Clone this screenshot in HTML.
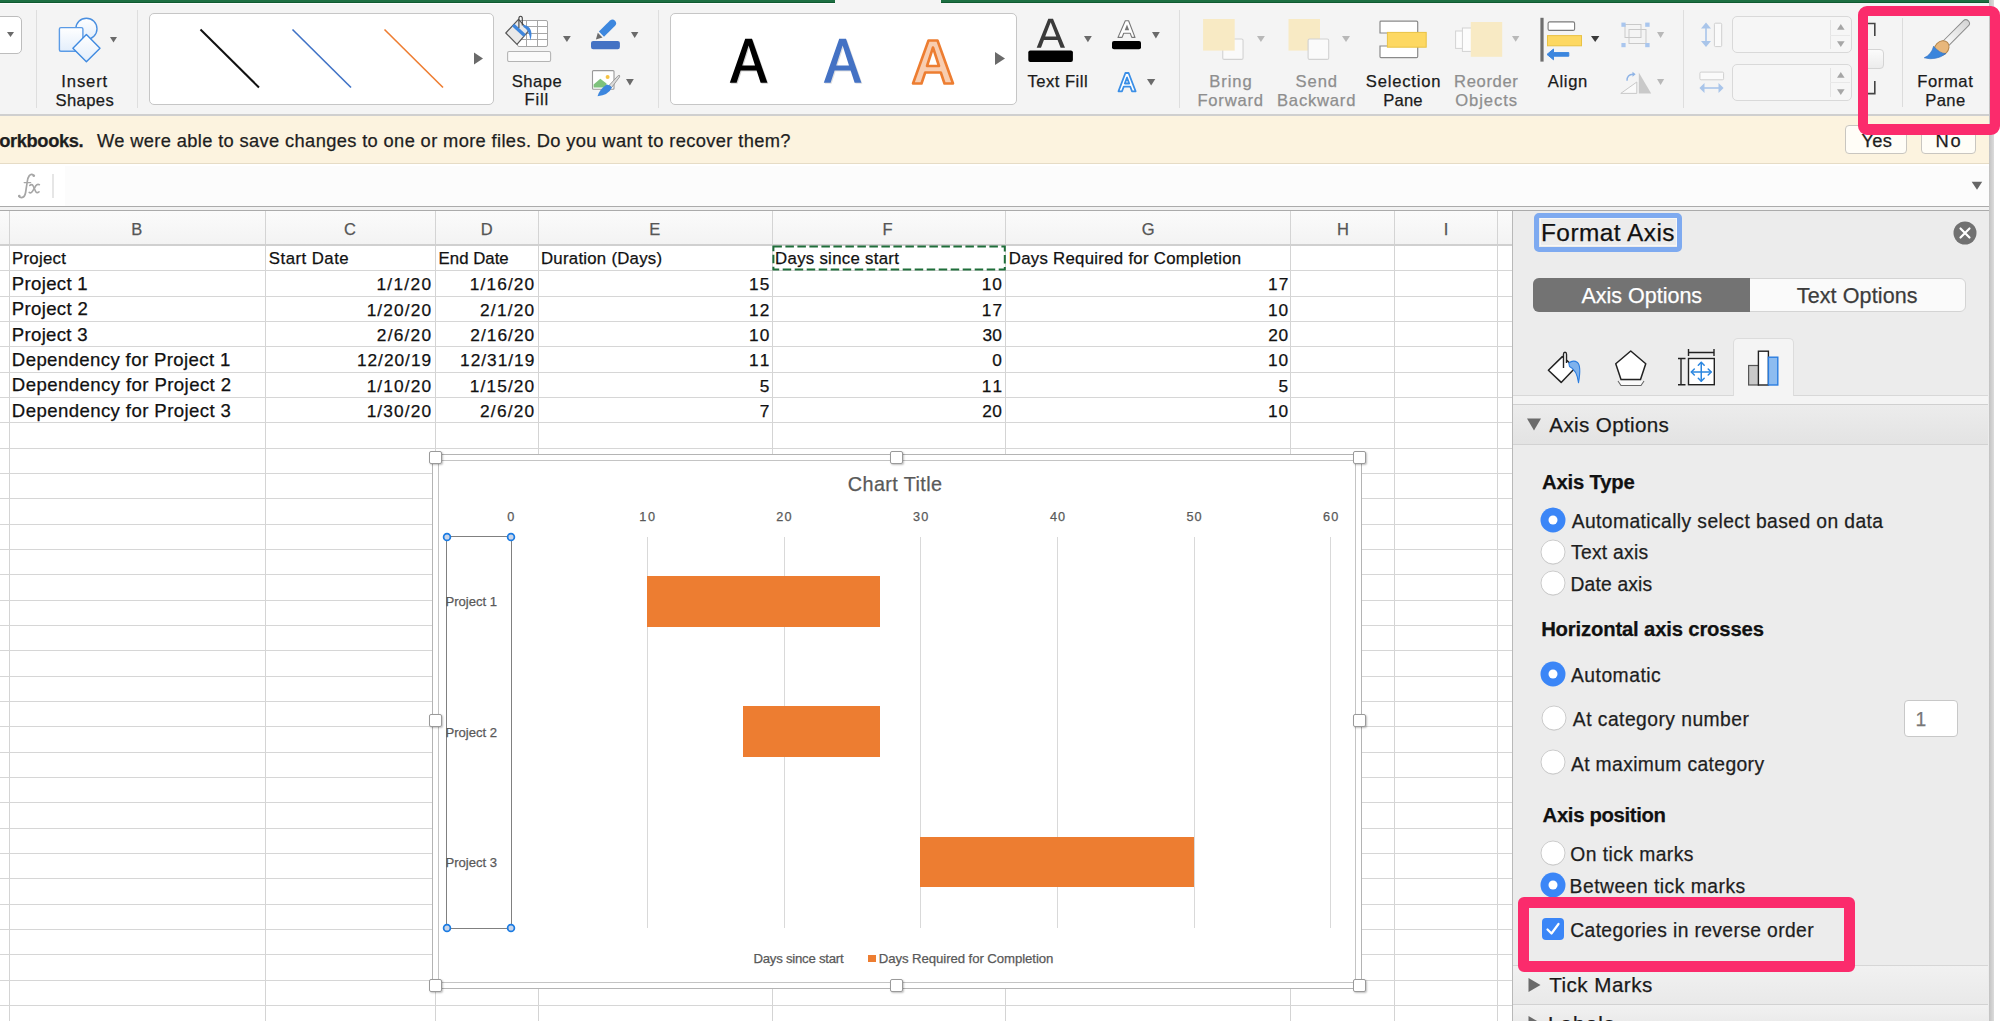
<!DOCTYPE html><html><head><meta charset="utf-8"><title>Excel</title><style>
*{margin:0;padding:0;box-sizing:border-box}
html,body{width:2000px;height:1021px;overflow:hidden;background:#fff;font-family:"Liberation Sans",sans-serif;color:#222}
.t{position:absolute;white-space:nowrap;line-height:1;-webkit-text-stroke:0.25px currentColor}
.a{position:absolute}
</style></head><body>
<div style="position:absolute;left:0px;top:0px;width:2000px;height:115px;background:#f4f4f4"></div>
<div style="position:absolute;left:0px;top:0px;width:835px;height:3px;background:#1d6f42;border-bottom:1px solid #0f5a30"></div>
<div style="position:absolute;left:941px;top:0px;width:1048px;height:3px;background:#1d6f42;border-bottom:1px solid #0f5a30"></div>
<div style="position:absolute;left:0px;top:3px;width:835px;height:1px;background:#fdfdfd"></div>
<div style="position:absolute;left:0px;top:114px;width:2000px;height:2px;background:#cfcfcf"></div>
<div style="position:absolute;left:-10px;top:16px;width:32px;height:38px;background:#fff;border:1px solid #bdbdbd;border-radius:5px"></div>
<svg class="a" style="left:6px;top:31px" width="9" height="7" viewBox="0 0 9 7"><path d="M1 1 L8 1 L4.5 6 Z" fill="#6a6a6a"/></svg>
<div style="position:absolute;left:36px;top:10px;width:1px;height:98px;background:#dedede"></div>
<div style="position:absolute;left:137px;top:10px;width:1px;height:98px;background:#dedede"></div>
<div style="position:absolute;left:658px;top:10px;width:1px;height:98px;background:#dedede"></div>
<div style="position:absolute;left:1179px;top:10px;width:1px;height:98px;background:#dedede"></div>
<div style="position:absolute;left:1683px;top:10px;width:1px;height:98px;background:#dedede"></div>
<svg class="a" style="left:56px;top:14px" width="50" height="52" viewBox="0 0 50 52">
<defs><linearGradient id="gs" x1="0" y1="0" x2="0" y2="1"><stop offset="0" stop-color="#ffffff"/><stop offset="1" stop-color="#e3eefb"/></linearGradient></defs>
<circle cx="30.4" cy="14.8" r="10.6" fill="url(#gs)" stroke="#4a8fe0" stroke-width="1.4"/>
<rect x="3.4" y="13.6" width="23.5" height="23.6" rx="1.5" fill="url(#gs)" stroke="#5b9be6" stroke-width="1.4"/>
<path d="M30.4 20.4 L44 34.2 L30.4 47.7 L16.9 34.2 Z" fill="url(#gs)" stroke="#3f8ae0" stroke-width="1.4" stroke-linejoin="round"/>
</svg>
<svg class="a" style="left:109px;top:35.5px" width="9" height="7.5" viewBox="0 0 9 7.5"><path d="M1 1 L8 1 L4.5 6.5 Z" fill="#6a6a6a"/></svg>
<div class="t" style="left:61.36px;top:73.95px;font-size:16.6px;color:#1a1a1a;letter-spacing:0.872px;">Insert</div>
<div class="t" style="left:55.40px;top:93.05px;font-size:16.6px;color:#1a1a1a;letter-spacing:0.422px;">Shapes</div>
<div style="position:absolute;left:149px;top:13px;width:345px;height:92px;background:#fff;border:1px solid #c6c6c6;border-radius:5px"></div>
<svg class="a" style="left:150px;top:14px" width="343" height="90" viewBox="0 0 343 90">
<line x1="50.5" y1="15.5" x2="109" y2="73.5" stroke="#111" stroke-width="2"/>
<line x1="142.5" y1="15.5" x2="201" y2="73.5" stroke="#3f72c6" stroke-width="1.6"/>
<line x1="234.5" y1="15.5" x2="293" y2="73.5" stroke="#ee7d31" stroke-width="1.6"/>
<path d="M324 38.5 L333 44.5 L324 50.5 Z" fill="#6a6a6a"/>
</svg>
<svg class="a" style="left:503px;top:14px" width="52" height="50" viewBox="0 0 52 50">
<g fill="none" stroke="#a6a6a6" stroke-width="1">
<rect x="14.5" y="6.5" width="30" height="26" rx="1.5" fill="#fff"/>
<line x1="23.5" y1="6.5" x2="23.5" y2="32.5"/><line x1="34.5" y1="6.5" x2="34.5" y2="32.5"/>
<line x1="14.5" y1="12.5" x2="44.5" y2="12.5"/><line x1="14.5" y1="19.5" x2="44.5" y2="19.5"/><line x1="14.5" y1="25.5" x2="44.5" y2="25.5"/>
</g>
<path d="M2.8 19 L15.5 5.3 L25.8 16.6 L14 30.3 Z" fill="#e9e9e9" stroke="#555" stroke-width="1.2" stroke-linejoin="round"/>
<path d="M9 12.2 L11.3 9.7 L22.8 20.2 L20.5 22.7 Z" fill="#3f86dc"/>
<path d="M15.9 14 L15.9 4.4 Q15.9 2.2 17.6 2.2 Q19.3 2.2 19.3 4.4 L19.3 11.5" fill="none" stroke="#444" stroke-width="1.1"/>
<path d="M20.4 10.7 Q31.5 13 27.3 26.6 Q26.5 16 20.2 12.8 Z" fill="#3f86dc"/>
<rect x="4.6" y="37.5" width="43" height="10" rx="1.5" fill="#fafafa" stroke="#b4b4b4" stroke-width="1.1"/>
</svg>
<svg class="a" style="left:561.6px;top:35.4px" width="9.799999999999955" height="7.899999999999999" viewBox="0 0 9.799999999999955 7.899999999999999"><path d="M1 1 L8.799999999999955 1 L4.899999999999977 6.899999999999999 Z" fill="#6a6a6a"/></svg>
<div class="t" style="left:511.65px;top:73.95px;font-size:16.6px;color:#1a1a1a;letter-spacing:0.520px;">Shape</div>
<div class="t" style="left:524.58px;top:92.45px;font-size:16.6px;color:#1a1a1a;letter-spacing:0.795px;">Fill</div>
<svg class="a" style="left:589px;top:18px" width="34" height="34" viewBox="0 0 34 34">
<path d="M6.9 21.4 L8.8 14.8 L13.5 19.5 Z" fill="#6b6b6b"/>
<path d="M9.9 13.4 L21 2.6 Q23.6 0.4 26 2.8 Q28.4 5.3 26.1 7.7 L15 18.8 Z" fill="#3d87de"/>
<rect x="2" y="22.9" width="28.9" height="8.3" rx="2.2" fill="#4472c4"/>
</svg>
<svg class="a" style="left:630.1px;top:31px" width="9.399999999999977" height="7.899999999999999" viewBox="0 0 9.399999999999977 7.899999999999999"><path d="M1 1 L8.399999999999977 1 L4.699999999999989 6.899999999999999 Z" fill="#6a6a6a"/></svg>
<svg class="a" style="left:590px;top:68px" width="34" height="32" viewBox="0 0 34 32">
<rect x="2.5" y="2.6" width="21.5" height="18.7" rx="1" fill="#fff" stroke="#9a9a9a" stroke-width="1.1"/>
<path d="M3.6 19.6 L3.6 16.5 L10.3 10.8 L16.5 15.5 L16.5 19.6 Z" fill="#7ec27c"/>
<circle cx="17.6" cy="9.1" r="2" fill="#f6c343"/>
<path d="M19 17.5 L28.2 7.6 Q30.2 6.6 29.6 8.9 L21.6 19.6 Z" fill="#dcdcdc" stroke="#8a8a8a" stroke-width="0.8"/>
<path d="M7.5 28.3 Q9.5 21 16.8 16.4 Q20.5 17 22 19.6 Q18.5 27.3 7.5 28.3 Z" fill="#3c86de"/>
</svg>
<svg class="a" style="left:625.2px;top:78px" width="9.799999999999955" height="8.400000000000006" viewBox="0 0 9.799999999999955 8.400000000000006"><path d="M1 1 L8.799999999999955 1 L4.899999999999977 7.400000000000006 Z" fill="#6a6a6a"/></svg>
<div style="position:absolute;left:670px;top:13px;width:347px;height:92px;background:#fff;border:1px solid #c6c6c6;border-radius:5px"></div>
<svg class="a" style="left:729px;top:38px" width="42" height="48" viewBox="0 0 42 48"><path d="M0.8 44.8 L16.2 0.8 L23 0.8 L38.4 44.8 L31.6 44.8 L27.6 32.6 L11.6 32.6 L7.6 44.8 Z M13.2 27.4 L26 27.4 L19.6 7.6 Z" fill="#000" fill-rule="evenodd" transform="translate(1,1)" opacity="0.18"/><path d="M0.8 44.8 L16.2 0.8 L23 0.8 L38.4 44.8 L31.6 44.8 L27.6 32.6 L11.6 32.6 L7.6 44.8 Z M13.2 27.4 L26 27.4 L19.6 7.6 Z" fill="#000" fill-rule="evenodd"/></svg>
<svg class="a" style="left:822.6px;top:38px" width="42" height="48" viewBox="0 0 42 48"><path d="M0.8 44.8 L16.2 0.8 L23 0.8 L38.4 44.8 L31.6 44.8 L27.6 32.6 L11.6 32.6 L7.6 44.8 Z M13.2 27.4 L26 27.4 L19.6 7.6 Z" fill="#000" fill-rule="evenodd" transform="translate(1,1)" opacity="0.12"/><path d="M0.8 44.8 L16.2 0.8 L23 0.8 L38.4 44.8 L31.6 44.8 L27.6 32.6 L11.6 32.6 L7.6 44.8 Z M13.2 27.4 L26 27.4 L19.6 7.6 Z" fill="#4472c4" fill-rule="evenodd"/></svg>
<svg class="a" style="left:911px;top:37.5px" width="46" height="49" viewBox="0 0 46 49"><path d="M2 45.5 L17.5 2.5 L26.5 2.5 L42 45.5 L33.5 45.5 L29.8 34.5 L14.2 34.5 L10.5 45.5 Z M16 28 L28 28 L22 9.5 Z" fill="#f8cdb0" stroke="#ed7d31" stroke-width="2.6" stroke-linejoin="round" fill-rule="evenodd"/></svg>
<svg class="a" style="left:994px;top:51px" width="12" height="16" viewBox="0 0 12 16"><path d="M1 1 L11 7.5 L1 14 Z" fill="#6a6a6a"/></svg>
<svg class="a" style="left:1026px;top:16px" width="50" height="48" viewBox="0 0 50 48">
<path d="M10.7 31.7 L22.3 2.8 L27 2.8 L39 31.7 L34.6 31.7 L31.6 24 L17.9 24 L15 31.7 Z M19.2 20.5 L30.3 20.5 L24.7 6.2 Z" fill="#3a3a3a"/>
<rect x="2.3" y="34.6" width="44.6" height="11.3" rx="2" fill="#000"/>
</svg>
<svg class="a" style="left:1083.2px;top:35px" width="9.799999999999955" height="8.299999999999997" viewBox="0 0 9.799999999999955 8.299999999999997"><path d="M1 1 L8.799999999999955 1 L4.899999999999977 7.299999999999997 Z" fill="#6a6a6a"/></svg>
<div class="t" style="left:1027.43px;top:73.95px;font-size:16.6px;color:#1a1a1a;letter-spacing:0.502px;">Text Fill</div>
<svg class="a" style="left:1110px;top:18px" width="34" height="34" viewBox="0 0 34 34">
<path d="M8 19.4 L15.3 2.8 L18.6 2.8 L25 19.4 L21.8 19.4 L20.2 15.2 L13.7 15.2 L12.1 19.4 Z" fill="#fff" stroke="#777" stroke-width="1.1" stroke-linejoin="round"/>
<path d="M14.7 12.3 L19.2 12.3 L17 6.6 Z" fill="#777"/>
<rect x="2" y="22.9" width="29" height="8.3" rx="2" fill="#000"/>
</svg>
<svg class="a" style="left:1151.2px;top:30.5px" width="9.799999999999955" height="8.399999999999999" viewBox="0 0 9.799999999999955 8.399999999999999"><path d="M1 1 L8.799999999999955 1 L4.899999999999977 7.399999999999999 Z" fill="#6a6a6a"/></svg>
<svg class="a" style="left:1114px;top:70px" width="26" height="26" viewBox="0 0 26 26">
<path d="M4.5 21.3 L11.4 3 L14.6 3 L21.6 21.3 L18 21.3 L16.3 16.7 L9.7 16.7 L8 21.3 Z M10.8 13.5 L15.2 13.5 L13 7.5 Z" fill="#fff" stroke="#3a8ee6" stroke-width="1.8" stroke-linejoin="round"/>
</svg>
<svg class="a" style="left:1146.3px;top:78px" width="10.299999999999955" height="8.400000000000006" viewBox="0 0 10.299999999999955 8.400000000000006"><path d="M1 1 L9.299999999999955 1 L5.149999999999977 7.400000000000006 Z" fill="#6a6a6a"/></svg>
<svg class="a" style="left:1200px;top:17px" width="48" height="46" viewBox="0 0 48 46">
<rect x="22.75" y="22" width="20.3" height="20.4" rx="1.5" fill="#fafafa" stroke="#d2d2d2" stroke-width="1.1"/>
<rect x="3.1" y="2" width="31.6" height="31.6" fill="#f8eac4"/>
</svg>
<svg class="a" style="left:1255.9px;top:35.25px" width="9.849999999999909" height="8.0" viewBox="0 0 9.849999999999909 8.0"><path d="M1 1 L8.849999999999909 1 L4.9249999999999545 7.0 Z" fill="#b8b8b8"/></svg>
<div class="t" style="left:1209.13px;top:73.95px;font-size:16.6px;color:#8e8e8e;letter-spacing:0.972px;">Bring</div>
<div class="t" style="left:1197.38px;top:93.05px;font-size:16.6px;color:#8e8e8e;letter-spacing:0.804px;">Forward</div>
<svg class="a" style="left:1285px;top:17px" width="48" height="46" viewBox="0 0 48 46">
<rect x="3.5" y="2" width="31.5" height="31.6" fill="#f8eac4"/>
<rect x="23.1" y="22" width="20.6" height="20.4" rx="1.5" fill="#fafafa" stroke="#d2d2d2" stroke-width="1.1"/>
</svg>
<svg class="a" style="left:1341.25px;top:35.25px" width="10.0" height="8.0" viewBox="0 0 10.0 8.0"><path d="M1 1 L9.0 1 L5.0 7.0 Z" fill="#b8b8b8"/></svg>
<div class="t" style="left:1295.60px;top:73.95px;font-size:16.6px;color:#8e8e8e;letter-spacing:0.908px;">Send</div>
<div class="t" style="left:1277.03px;top:93.05px;font-size:16.6px;color:#8e8e8e;letter-spacing:0.790px;">Backward</div>
<svg class="a" style="left:1377px;top:19px" width="52" height="41" viewBox="0 0 52 41">
<path d="M10 14 L3 14 L3 3 Q3 2.2 4 2.2 L39.5 2.2 Q40.7 2.2 40.7 3.2 L40.7 13" fill="#fff" stroke="#8a8a8a" stroke-width="1.2"/>
<path d="M10 27 L3 27 L3 37.5 Q3 38.6 4 38.6 L39.5 38.6 Q40.7 38.6 40.7 37.5 L40.7 28" fill="#fff" stroke="#8a8a8a" stroke-width="1.2"/>
<rect x="10.4" y="13.4" width="38.8" height="14.8" fill="#fdd862" stroke="#e9c244" stroke-width="1"/>
</svg>
<div class="t" style="left:1365.85px;top:73.95px;font-size:16.6px;color:#1a1a1a;letter-spacing:0.790px;">Selection</div>
<div class="t" style="left:1383.18px;top:93.05px;font-size:16.6px;color:#1a1a1a;letter-spacing:0.205px;">Pane</div>
<svg class="a" style="left:1453px;top:20px" width="52" height="40" viewBox="0 0 52 40">
<rect x="2.6" y="11" width="14" height="17.4" fill="#fcfcfc" stroke="#d2d2d2" stroke-width="1"/>
<rect x="9.4" y="8" width="14" height="23.4" fill="#fcfcfc" stroke="#d2d2d2" stroke-width="1"/>
<rect x="17.8" y="2" width="31.4" height="34.8" fill="#f8eac4"/>
</svg>
<svg class="a" style="left:1511.2px;top:35.4px" width="9.399999999999864" height="7.800000000000004" viewBox="0 0 9.399999999999864 7.800000000000004"><path d="M1 1 L8.399999999999864 1 L4.699999999999932 6.800000000000004 Z" fill="#b8b8b8"/></svg>
<div class="t" style="left:1454.03px;top:73.95px;font-size:16.6px;color:#8e8e8e;letter-spacing:0.642px;">Reorder</div>
<div class="t" style="left:1455.21px;top:93.05px;font-size:16.6px;color:#8e8e8e;letter-spacing:0.916px;">Objects</div>
<svg class="a" style="left:1538px;top:16px" width="46" height="48" viewBox="0 0 46 48">
<rect x="2.4" y="1.8" width="3.2" height="43.8" fill="#6e6e6e"/>
<rect x="10.1" y="5.9" width="26.5" height="8.5" rx="1.5" fill="#fff" stroke="#7a7a7a" stroke-width="1.1"/>
<rect x="9.5" y="19.6" width="34" height="10.2" fill="#fdd862" stroke="#e9c244" stroke-width="1"/>
<path d="M9 38.4 L15.5 33 L15.5 36.6 L30.8 36.6 L30.8 40.2 L15.5 40.2 L15.5 43.8 Z" fill="#3c86de" stroke="#3c86de" stroke-width="1" stroke-linejoin="round"/>
</svg>
<svg class="a" style="left:1589.8px;top:35.4px" width="10.400000000000091" height="8.0" viewBox="0 0 10.400000000000091 8.0"><path d="M1 1 L9.400000000000091 1 L5.2000000000000455 7.0 Z" fill="#3a3a3a"/></svg>
<div class="t" style="left:1547.76px;top:73.95px;font-size:16.6px;color:#1a1a1a;letter-spacing:0.646px;">Align</div>
<svg class="a" style="left:1619px;top:20px" width="34" height="30" viewBox="0 0 34 30">
<g stroke="#c9c9c9" stroke-width="1" fill="none"><rect x="6" y="4.5" width="16" height="13"/><rect x="10" y="9.5" width="17" height="14"/></g>
<g fill="#a9c6ee"><rect x="2.4" y="2.6" width="4.2" height="4.2"/><rect x="26.2" y="2.6" width="4.4" height="4.2"/><rect x="2.4" y="23" width="4.2" height="4.2"/><rect x="26.2" y="23" width="4.4" height="4.2"/></g>
</svg>
<svg class="a" style="left:1655.8px;top:30.6px" width="9.200000000000045" height="8.0" viewBox="0 0 9.200000000000045 8.0"><path d="M1 1 L8.200000000000045 1 L4.600000000000023 7.0 Z" fill="#b8b8b8"/></svg>
<svg class="a" style="left:1619px;top:70px" width="36" height="26" viewBox="0 0 36 26">
<path d="M1.8 23.4 L17.8 12 L17.8 23.4 Z" fill="#fafafa" stroke="#c9c9c9" stroke-width="1"/>
<path d="M19.8 2.4 L32.2 23.4 L19.8 23.4 Z" fill="#c9c9c9"/>
<path d="M8 10.8 Q8 4.5 14 4.3" fill="none" stroke="#8fb4e6" stroke-width="1.4"/>
<path d="M13.5 1.8 L16.6 4.3 L13.5 6.8 Z" fill="#8fb4e6"/>
</svg>
<svg class="a" style="left:1655.8px;top:78px" width="9.200000000000045" height="8" viewBox="0 0 9.200000000000045 8"><path d="M1 1 L8.200000000000045 1 L4.600000000000023 7 Z" fill="#b8b8b8"/></svg>
<svg class="a" style="left:1699px;top:21px" width="26" height="28" viewBox="0 0 26 28">
<path d="M7 3.6 L7 23.8" stroke="#a9c5ea" stroke-width="1.6"/>
<path d="M2 7.6 L7 1.6 L12 7.6 Z M2 20 L7 26 L12 20 Z" fill="#a9c5ea"/>
<rect x="15.4" y="2.2" width="7.3" height="23.4" rx="1.2" fill="#fafafa" stroke="#cfcfcf" stroke-width="1"/>
</svg>
<svg class="a" style="left:1698px;top:70px" width="28" height="26" viewBox="0 0 28 26">
<rect x="1.9" y="2.1" width="23.7" height="7.7" rx="1.2" fill="#fafafa" stroke="#cfcfcf" stroke-width="1"/>
<path d="M4.5 18 L23 18" stroke="#a9c5ea" stroke-width="1.6"/>
<path d="M1.4 18 L6.5 13.1 L6.5 23 Z M25.6 18 L20.5 13.1 L20.5 23 Z" fill="#a9c5ea"/>
</svg>
<div style="position:absolute;left:1732px;top:16px;width:120px;height:37.4px;background:#f6f6f6;border:1px solid #d9d9d9;border-radius:5px"></div>
<div style="position:absolute;left:1829.5px;top:20px;width:1px;height:29.4px;background:#e4e4e4"></div>
<div style="position:absolute;left:1830px;top:34.7px;width:20px;height:1px;background:#e8e8e8"></div>
<div style="position:absolute;left:1732px;top:63.9px;width:120px;height:36.800000000000004px;background:#f6f6f6;border:1px solid #d9d9d9;border-radius:5px"></div>
<div style="position:absolute;left:1829.5px;top:67.9px;width:1px;height:28.800000000000004px;background:#e4e4e4"></div>
<div style="position:absolute;left:1830px;top:82.3px;width:20px;height:1px;background:#e8e8e8"></div>
<svg class="a" style="left:1836px;top:23px" width="10" height="8" viewBox="0 0 10 8"><path d="M1 6.8 L4.8 1 L8.6 6.8 Z" fill="#a6a6a6"/></svg>
<svg class="a" style="left:1836px;top:40px" width="10" height="8" viewBox="0 0 10 8"><path d="M1 1.2 L4.8 7 L8.6 1.2 Z" fill="#a6a6a6"/></svg>
<svg class="a" style="left:1836px;top:70.5px" width="10" height="8" viewBox="0 0 10 8"><path d="M1 6.8 L4.8 1 L8.6 6.8 Z" fill="#a6a6a6"/></svg>
<svg class="a" style="left:1836px;top:87.5px" width="10" height="8" viewBox="0 0 10 8"><path d="M1 1.2 L4.8 7 L8.6 1.2 Z" fill="#a6a6a6"/></svg>
<svg class="a" style="left:1866px;top:20px" width="12" height="78" viewBox="0 0 12 78">
<path d="M2 3.5 L8.8 3.5 L8.8 16" fill="none" stroke="#444" stroke-width="1.6"/>
<path d="M2 73.6 L8.8 73.6 L8.8 61" fill="none" stroke="#444" stroke-width="1.6"/>
</svg>
<div style="position:absolute;left:1862px;top:48.5px;width:22px;height:20.5px;background:linear-gradient(#fbfbfb,#ececec);border:1px solid #d4d4d4;border-radius:4px"></div>
<div style="position:absolute;left:1902px;top:18px;width:1px;height:89px;background:#dcdcdc"></div>
<svg class="a" style="left:1920px;top:18px" width="52" height="46" viewBox="0 0 52 46">
<defs><linearGradient id="gh" x1="0" y1="0" x2="1" y2="0"><stop offset="0" stop-color="#ffffff"/><stop offset="1" stop-color="#d4d4d4"/></linearGradient></defs>
<rect x="-18" y="-3.6" width="36" height="7.2" rx="3.6" transform="translate(35.6,15.6) rotate(-45)" fill="url(#gh)" stroke="#8c8c8c" stroke-width="1"/>
<ellipse cx="21.6" cy="30.2" rx="8.2" ry="6.6" transform="rotate(-45 21.6 30.2)" fill="#e8b77b" stroke="#b5874d" stroke-width="1"/>
<path d="M13.6 28.2 Q11.5 36.5 4.2 39.8 Q16 43 26 35.6 Q19.5 35.5 13.6 28.2 Z" fill="#3a85dc" stroke="#2f6fc0" stroke-width="0.6"/>
</svg>
<div class="t" style="left:1917.13px;top:73.85px;font-size:16.6px;color:#1a1a1a;letter-spacing:0.623px;">Format</div>
<div class="t" style="left:1925.33px;top:92.75px;font-size:16.6px;color:#1a1a1a;letter-spacing:0.371px;">Pane</div>
<div style="position:absolute;left:0px;top:116px;width:2000px;height:48px;background:#fcf3df;border-bottom:1px solid #e6dcc6"></div>
<div class="t" style="left:-0.73px;top:132.01px;font-size:18.3px;color:#1e1e1e;font-weight:bold;letter-spacing:-0.383px;">orkbooks.</div>
<div class="t" style="left:96.91px;top:132.01px;font-size:18.3px;color:#1e1e1e;letter-spacing:0.363px;">We were able to save changes to one or more files. Do you want to recover them?</div>
<div style="position:absolute;left:1845px;top:124.5px;width:62px;height:29.5px;background:#fffdf7;border:1px solid #c9c6c0;border-radius:4px"></div>
<div class="t" style="left:1861.54px;top:132.01px;font-size:18.3px;color:#1e1e1e;letter-spacing:0.239px;">Yes</div>
<div style="position:absolute;left:1921px;top:124.5px;width:55px;height:29.5px;background:#fffdf7;border:1px solid #c9c6c0;border-radius:4px"></div>
<div class="t" style="left:1935.49px;top:132.01px;font-size:18.3px;color:#1e1e1e;letter-spacing:1.863px;">No</div>
<div style="position:absolute;left:0px;top:164px;width:1989px;height:43px;background:#fff"></div>
<svg class="a" style="left:15px;top:172px" width="28" height="28"><g fill="none" stroke="#a6a6a6" stroke-linecap="round"><path d="M18.6 3.4 Q16.5 1.2 14.3 3.6 Q12.8 5.5 12.2 10 L10.6 20.5 Q9.8 25.3 6.6 25.6 Q4.6 25.6 4 24.3" stroke-width="1.7"/><path d="M9.2 10.6 L15.6 10.6" stroke-width="1.4"/><path d="M14.8 13.4 Q17 11.6 18.2 14 L20.6 19.4 Q21.8 21.6 24 19.8" stroke-width="1.6"/><path d="M14.2 20.4 Q16 21.8 17.6 19.2 L20.8 13.8 Q22.3 11.6 24.4 12.7" stroke-width="1.6"/></g><circle cx="18.8" cy="3.8" r="1.3" fill="#a6a6a6"/><circle cx="4.3" cy="24" r="1.3" fill="#a6a6a6"/></svg>
<div style="position:absolute;left:52px;top:174px;width:2px;height:24px;background:#e6e6e6"></div>
<div style="position:absolute;left:65px;top:166px;width:1924px;height:40px;background:#fcfcfc"></div>
<svg class="a" style="left:1971px;top:181px" width="12" height="10"><path d="M0.7 0.8 L11.2 0.8 L6 8.7 Z" fill="#666"/></svg>
<div style="position:absolute;left:0px;top:206px;width:1989px;height:1px;background:#ababab"></div>
<div style="position:absolute;left:0px;top:207px;width:1989px;height:3px;background:#f2f2f2"></div>
<div style="position:absolute;left:0px;top:210px;width:1989px;height:1px;background:#ababab"></div>
<div style="position:absolute;left:1989px;top:0px;width:11px;height:1021px;background:#fff"></div>
<div style="position:absolute;left:1989px;top:0px;width:5px;height:1021px;background:linear-gradient(90deg,#c2c2c2,#dcdcdc)"></div>
<div style="position:absolute;left:0px;top:211px;width:1512px;height:810px;background:#fff"></div>
<div style="position:absolute;left:0px;top:211px;width:1512px;height:34px;background:linear-gradient(#fbfbfb,#f3f3f3)"></div>
<div class="t" style="left:131.25px;top:220.93px;font-size:16.5px;color:#555;">B</div>
<div class="t" style="left:343.94px;top:220.93px;font-size:16.5px;color:#555;">C</div>
<div class="t" style="left:480.75px;top:220.93px;font-size:16.5px;color:#555;">D</div>
<div class="t" style="left:649.16px;top:220.93px;font-size:16.5px;color:#555;">E</div>
<div class="t" style="left:882.62px;top:220.93px;font-size:16.5px;color:#555;">F</div>
<div class="t" style="left:1141.79px;top:220.93px;font-size:16.5px;color:#555;">G</div>
<div class="t" style="left:1337.04px;top:220.93px;font-size:16.5px;color:#555;">H</div>
<div class="t" style="left:1443.71px;top:220.93px;font-size:16.5px;color:#555;">I</div>
<div style="position:absolute;left:9px;top:211px;width:1px;height:810px;background:#d4d4d4"></div>
<div style="position:absolute;left:265px;top:211px;width:1px;height:810px;background:#d4d4d4"></div>
<div style="position:absolute;left:435px;top:211px;width:1px;height:810px;background:#d4d4d4"></div>
<div style="position:absolute;left:538px;top:211px;width:1px;height:810px;background:#d4d4d4"></div>
<div style="position:absolute;left:772px;top:211px;width:1px;height:810px;background:#d4d4d4"></div>
<div style="position:absolute;left:1005px;top:211px;width:1px;height:810px;background:#d4d4d4"></div>
<div style="position:absolute;left:1290px;top:211px;width:1px;height:810px;background:#d4d4d4"></div>
<div style="position:absolute;left:1394px;top:211px;width:1px;height:810px;background:#d4d4d4"></div>
<div style="position:absolute;left:1497px;top:211px;width:1px;height:810px;background:#d4d4d4"></div>
<div style="position:absolute;left:0px;top:244px;width:1512px;height:2px;background:#d0d0d0"></div>
<div style="position:absolute;left:0px;top:270px;width:1512px;height:1px;background:#d6d6d6"></div>
<div style="position:absolute;left:0px;top:296px;width:1512px;height:1px;background:#d6d6d6"></div>
<div style="position:absolute;left:0px;top:321px;width:1512px;height:1px;background:#d6d6d6"></div>
<div style="position:absolute;left:0px;top:346px;width:1512px;height:1px;background:#d6d6d6"></div>
<div style="position:absolute;left:0px;top:372px;width:1512px;height:1px;background:#d6d6d6"></div>
<div style="position:absolute;left:0px;top:397px;width:1512px;height:1px;background:#d6d6d6"></div>
<div style="position:absolute;left:0px;top:422px;width:1512px;height:1px;background:#d6d6d6"></div>
<div style="position:absolute;left:0px;top:448px;width:1512px;height:1px;background:#d6d6d6"></div>
<div style="position:absolute;left:0px;top:473px;width:1512px;height:1px;background:#d6d6d6"></div>
<div style="position:absolute;left:0px;top:498px;width:1512px;height:1px;background:#d6d6d6"></div>
<div style="position:absolute;left:0px;top:524px;width:1512px;height:1px;background:#d6d6d6"></div>
<div style="position:absolute;left:0px;top:549px;width:1512px;height:1px;background:#d6d6d6"></div>
<div style="position:absolute;left:0px;top:574px;width:1512px;height:1px;background:#d6d6d6"></div>
<div style="position:absolute;left:0px;top:600px;width:1512px;height:1px;background:#d6d6d6"></div>
<div style="position:absolute;left:0px;top:625px;width:1512px;height:1px;background:#d6d6d6"></div>
<div style="position:absolute;left:0px;top:650px;width:1512px;height:1px;background:#d6d6d6"></div>
<div style="position:absolute;left:0px;top:676px;width:1512px;height:1px;background:#d6d6d6"></div>
<div style="position:absolute;left:0px;top:701px;width:1512px;height:1px;background:#d6d6d6"></div>
<div style="position:absolute;left:0px;top:726px;width:1512px;height:1px;background:#d6d6d6"></div>
<div style="position:absolute;left:0px;top:752px;width:1512px;height:1px;background:#d6d6d6"></div>
<div style="position:absolute;left:0px;top:777px;width:1512px;height:1px;background:#d6d6d6"></div>
<div style="position:absolute;left:0px;top:802px;width:1512px;height:1px;background:#d6d6d6"></div>
<div style="position:absolute;left:0px;top:828px;width:1512px;height:1px;background:#d6d6d6"></div>
<div style="position:absolute;left:0px;top:853px;width:1512px;height:1px;background:#d6d6d6"></div>
<div style="position:absolute;left:0px;top:878px;width:1512px;height:1px;background:#d6d6d6"></div>
<div style="position:absolute;left:0px;top:904px;width:1512px;height:1px;background:#d6d6d6"></div>
<div style="position:absolute;left:0px;top:929px;width:1512px;height:1px;background:#d6d6d6"></div>
<div style="position:absolute;left:0px;top:954px;width:1512px;height:1px;background:#d6d6d6"></div>
<div style="position:absolute;left:0px;top:980px;width:1512px;height:1px;background:#d6d6d6"></div>
<div style="position:absolute;left:0px;top:1005px;width:1512px;height:1px;background:#d6d6d6"></div>
<div class="t" style="left:12.01px;top:251.28px;font-size:16.8px;color:#111;letter-spacing:0.270px;">Project</div>
<div class="t" style="left:268.84px;top:251.28px;font-size:16.8px;color:#111;letter-spacing:0.474px;">Start Date</div>
<div class="t" style="left:438.61px;top:251.28px;font-size:16.8px;color:#111;letter-spacing:0.012px;">End Date</div>
<div class="t" style="left:541.01px;top:251.28px;font-size:16.8px;color:#111;letter-spacing:0.254px;">Duration (Days)</div>
<div class="t" style="left:775.11px;top:251.28px;font-size:16.8px;color:#111;letter-spacing:0.288px;">Days since start</div>
<div class="t" style="left:1008.81px;top:251.28px;font-size:16.8px;color:#111;letter-spacing:0.281px;">Days Required for Completion</div>
<div class="t" style="left:11.87px;top:275.16px;font-size:18.6px;color:#111;letter-spacing:0.305px;">Project 1</div>
<div class="t" style="left:376.40px;top:276.26px;font-size:17.3px;color:#111;letter-spacing:1.310px;">1/1/20</div>
<div class="t" style="left:469.85px;top:276.26px;font-size:17.3px;color:#111;letter-spacing:1.117px;">1/16/20</div>
<div class="t" style="left:749.10px;top:276.26px;font-size:17.3px;color:#111;letter-spacing:0.986px;">15</div>
<div class="t" style="left:981.80px;top:276.26px;font-size:17.3px;color:#111;letter-spacing:0.943px;">10</div>
<div class="t" style="left:1267.90px;top:276.26px;font-size:17.3px;color:#111;letter-spacing:1.159px;">17</div>
<div class="t" style="left:11.87px;top:300.49px;font-size:18.6px;color:#111;letter-spacing:0.311px;">Project 2</div>
<div class="t" style="left:366.65px;top:301.59px;font-size:17.3px;color:#111;letter-spacing:1.117px;">1/20/20</div>
<div class="t" style="left:480.04px;top:301.59px;font-size:17.3px;color:#111;letter-spacing:1.224px;">2/1/20</div>
<div class="t" style="left:749.10px;top:301.59px;font-size:17.3px;color:#111;letter-spacing:1.159px;">12</div>
<div class="t" style="left:981.80px;top:301.59px;font-size:17.3px;color:#111;letter-spacing:1.159px;">17</div>
<div class="t" style="left:1267.90px;top:301.59px;font-size:17.3px;color:#111;letter-spacing:0.943px;">10</div>
<div class="t" style="left:11.87px;top:325.82px;font-size:18.6px;color:#111;letter-spacing:0.293px;">Project 3</div>
<div class="t" style="left:376.83px;top:326.92px;font-size:17.3px;color:#111;letter-spacing:1.224px;">2/6/20</div>
<div class="t" style="left:470.29px;top:326.92px;font-size:17.3px;color:#111;letter-spacing:1.045px;">2/16/20</div>
<div class="t" style="left:749.10px;top:326.92px;font-size:17.3px;color:#111;letter-spacing:0.943px;">10</div>
<div class="t" style="left:982.45px;top:326.92px;font-size:17.3px;color:#111;letter-spacing:0.294px;">30</div>
<div class="t" style="left:1268.34px;top:326.92px;font-size:17.3px;color:#111;letter-spacing:0.511px;">20</div>
<div class="t" style="left:11.87px;top:351.15px;font-size:18.6px;color:#111;letter-spacing:0.381px;">Dependency for Project 1</div>
<div class="t" style="left:356.90px;top:352.25px;font-size:17.3px;color:#111;letter-spacing:0.991px;">12/20/19</div>
<div class="t" style="left:460.10px;top:352.25px;font-size:17.3px;color:#111;letter-spacing:0.991px;">12/31/19</div>
<div class="t" style="left:749.10px;top:352.25px;font-size:17.3px;color:#111;letter-spacing:2.370px;">11</div>
<div class="t" style="left:992.35px;top:352.25px;font-size:17.3px;color:#111;">0</div>
<div class="t" style="left:1267.90px;top:352.25px;font-size:17.3px;color:#111;letter-spacing:0.943px;">10</div>
<div class="t" style="left:11.87px;top:376.49px;font-size:18.6px;color:#111;letter-spacing:0.409px;">Dependency for Project 2</div>
<div class="t" style="left:366.65px;top:377.59px;font-size:17.3px;color:#111;letter-spacing:1.117px;">1/10/20</div>
<div class="t" style="left:469.85px;top:377.59px;font-size:17.3px;color:#111;letter-spacing:1.117px;">1/15/20</div>
<div class="t" style="left:759.69px;top:377.59px;font-size:17.3px;color:#111;">5</div>
<div class="t" style="left:981.80px;top:377.59px;font-size:17.3px;color:#111;letter-spacing:2.370px;">11</div>
<div class="t" style="left:1278.49px;top:377.59px;font-size:17.3px;color:#111;">5</div>
<div class="t" style="left:11.87px;top:401.82px;font-size:18.6px;color:#111;letter-spacing:0.403px;">Dependency for Project 3</div>
<div class="t" style="left:366.65px;top:402.92px;font-size:17.3px;color:#111;letter-spacing:1.117px;">1/30/20</div>
<div class="t" style="left:480.04px;top:402.92px;font-size:17.3px;color:#111;letter-spacing:1.224px;">2/6/20</div>
<div class="t" style="left:759.86px;top:402.92px;font-size:17.3px;color:#111;">7</div>
<div class="t" style="left:982.23px;top:402.92px;font-size:17.3px;color:#111;letter-spacing:0.511px;">20</div>
<div class="t" style="left:1267.90px;top:402.92px;font-size:17.3px;color:#111;letter-spacing:0.943px;">10</div>
<svg class="a" style="left:770px;top:243px" width="240" height="30"><rect x="3.4" y="3.4" width="231.4" height="23" fill="none" stroke="#1f6e3a" stroke-width="2" stroke-dasharray="8.5 3.5"/></svg>
<div style="position:absolute;left:432px;top:454px;width:930px;height:535px;background:#fff;border:1px solid #b4b4b4"></div>
<div style="position:absolute;left:438px;top:460px;width:918px;height:523px;background:#fff;border:1px solid #c4c4c4"></div>
<div style="position:absolute;left:429px;top:451px;width:13px;height:13px;background:#fff;border:1px solid #9a9a9a;border-radius:2px;box-shadow:1px 1px 2px rgba(0,0,0,0.25)"></div>
<div style="position:absolute;left:429px;top:979px;width:13px;height:13px;background:#fff;border:1px solid #9a9a9a;border-radius:2px;box-shadow:1px 1px 2px rgba(0,0,0,0.25)"></div>
<div style="position:absolute;left:890px;top:451px;width:13px;height:13px;background:#fff;border:1px solid #9a9a9a;border-radius:2px;box-shadow:1px 1px 2px rgba(0,0,0,0.25)"></div>
<div style="position:absolute;left:890px;top:979px;width:13px;height:13px;background:#fff;border:1px solid #9a9a9a;border-radius:2px;box-shadow:1px 1px 2px rgba(0,0,0,0.25)"></div>
<div style="position:absolute;left:1353px;top:451px;width:13px;height:13px;background:#fff;border:1px solid #9a9a9a;border-radius:2px;box-shadow:1px 1px 2px rgba(0,0,0,0.25)"></div>
<div style="position:absolute;left:1353px;top:979px;width:13px;height:13px;background:#fff;border:1px solid #9a9a9a;border-radius:2px;box-shadow:1px 1px 2px rgba(0,0,0,0.25)"></div>
<div style="position:absolute;left:429px;top:714px;width:13px;height:13px;background:#fff;border:1px solid #9a9a9a;border-radius:2px;box-shadow:1px 1px 2px rgba(0,0,0,0.25)"></div>
<div style="position:absolute;left:1353px;top:714px;width:13px;height:13px;background:#fff;border:1px solid #9a9a9a;border-radius:2px;box-shadow:1px 1px 2px rgba(0,0,0,0.25)"></div>
<div class="t" style="left:847.81px;top:474.54px;font-size:19.8px;color:#595959;letter-spacing:0.414px;">Chart Title</div>
<div class="t" style="left:507.16px;top:511.35px;font-size:12.7px;color:#595959;">0</div>
<div class="t" style="left:639.31px;top:511.35px;font-size:12.7px;color:#595959;letter-spacing:1.532px;">10</div>
<div style="position:absolute;left:646.5px;top:537px;width:1px;height:391px;background:#d9d9d9"></div>
<div class="t" style="left:776.30px;top:511.35px;font-size:12.7px;color:#595959;letter-spacing:1.214px;">20</div>
<div style="position:absolute;left:783.5px;top:537px;width:1px;height:391px;background:#d9d9d9"></div>
<div class="t" style="left:913.12px;top:511.35px;font-size:12.7px;color:#595959;letter-spacing:1.056px;">30</div>
<div style="position:absolute;left:919.5px;top:537px;width:1px;height:391px;background:#d9d9d9"></div>
<div class="t" style="left:1049.98px;top:511.35px;font-size:12.7px;color:#595959;letter-spacing:0.865px;">40</div>
<div style="position:absolute;left:1056.5px;top:537px;width:1px;height:391px;background:#d9d9d9"></div>
<div class="t" style="left:1186.43px;top:511.35px;font-size:12.7px;color:#595959;letter-spacing:1.087px;">50</div>
<div style="position:absolute;left:1193.5px;top:537px;width:1px;height:391px;background:#d9d9d9"></div>
<div class="t" style="left:1322.97px;top:511.35px;font-size:12.7px;color:#595959;letter-spacing:1.214px;">60</div>
<div style="position:absolute;left:1329.5px;top:537px;width:1px;height:391px;background:#d9d9d9"></div>
<div style="position:absolute;left:647px;top:576px;width:233px;height:51px;background:#ed7d31"></div>
<div style="position:absolute;left:743px;top:706px;width:137px;height:51px;background:#ed7d31"></div>
<div style="position:absolute;left:920px;top:837px;width:274px;height:50px;background:#ed7d31"></div>
<div style="position:absolute;left:445.5px;top:535.5px;width:66px;height:393px;border:1.4px solid #808080"></div>
<svg class="a" style="left:440.5px;top:530.5px" width="12" height="12"><circle cx="6" cy="6" r="3.4" fill="#c8d5ea" stroke="#1b7be2" stroke-width="1.7"/></svg>
<svg class="a" style="left:504.8px;top:530.5px" width="12" height="12"><circle cx="6" cy="6" r="3.4" fill="#c8d5ea" stroke="#1b7be2" stroke-width="1.7"/></svg>
<svg class="a" style="left:440.5px;top:921.5px" width="12" height="12"><circle cx="6" cy="6" r="3.4" fill="#c8d5ea" stroke="#1b7be2" stroke-width="1.7"/></svg>
<svg class="a" style="left:504.8px;top:921.5px" width="12" height="12"><circle cx="6" cy="6" r="3.4" fill="#c8d5ea" stroke="#1b7be2" stroke-width="1.7"/></svg>
<div class="t" style="left:445.52px;top:595.01px;font-size:13.1px;color:#595959;letter-spacing:-0.022px;">Project 1</div>
<div class="t" style="left:445.52px;top:725.61px;font-size:13.1px;color:#595959;letter-spacing:-0.018px;">Project 2</div>
<div class="t" style="left:445.52px;top:856.01px;font-size:13.1px;color:#595959;letter-spacing:-0.030px;">Project 3</div>
<div class="t" style="left:753.41px;top:951.63px;font-size:13.2px;color:#595959;letter-spacing:-0.240px;">Days since start</div>
<div style="position:absolute;left:868.4px;top:954.5px;width:8px;height:7.5px;background:#ed7d31"></div>
<div class="t" style="left:878.81px;top:951.63px;font-size:13.2px;color:#595959;letter-spacing:-0.078px;">Days Required for Completion</div>
<div style="position:absolute;left:1512px;top:211px;width:477px;height:810px;background:#ececec;border-left:1px solid #b8b8b8"></div>
<div style="position:absolute;left:1534.2px;top:212.5px;width:148px;height:39.4px;border:5.3px solid #7eaaf0;border-radius:5px;background:#ececec"></div>
<div style="position:absolute;left:1539.5px;top:217.9px;width:137.4px;height:28.6px;border:1px solid #f7f7f7"></div>
<div class="t" style="left:1540.99px;top:220.65px;font-size:24.4px;color:#111;letter-spacing:0.473px;">Format Axis</div>
<svg class="a" style="left:1953px;top:221px" width="24" height="24"><circle cx="12" cy="12" r="11.5" fill="#717171"/><path d="M7.5 7.5 L16.5 16.5 M16.5 7.5 L7.5 16.5" stroke="#fff" stroke-width="2.2" stroke-linecap="round"/></svg>
<div style="position:absolute;left:1533px;top:278px;width:433px;height:34px;background:#fafafa;border:1px solid #d4d4d4;border-radius:6px"></div>
<div style="position:absolute;left:1533px;top:278px;width:217px;height:34px;background:#737373;border-radius:6px 0 0 6px"></div>
<div class="t" style="left:1581.45px;top:285.50px;font-size:21.5px;color:#fff;">Axis Options</div>
<div class="t" style="left:1796.77px;top:285.50px;font-size:21.5px;color:#3c3c3c;letter-spacing:0.114px;">Text Options</div>
<div style="position:absolute;left:1733px;top:338px;width:61px;height:67px;background:#f4f4f4;border:1px solid #dcdcdc;border-bottom:none;border-radius:5px 5px 0 0"></div>
<div style="position:absolute;left:1513px;top:395px;width:220px;height:1px;background:#d8d8d8"></div>
<div style="position:absolute;left:1794px;top:395px;width:194px;height:1px;background:#d8d8d8"></div>
<div style="position:absolute;left:1513px;top:396px;width:475px;height:9px;background:#f4f4f4"></div>
<div style="position:absolute;left:1513px;top:404px;width:475px;height:1px;background:#d0d0d0"></div>
<svg class="a" style="left:1546px;top:348px" width="40" height="40" viewBox="0 0 40 40">
<path d="M2.4 22.2 L16.3 8.6 L29.3 19.8 L15.2 34.4 Z" fill="#fff" stroke="#222" stroke-width="1.5" stroke-linejoin="round"/>
<path d="M17.5 20 L17.5 6.2 Q17.5 4.3 19 4.3 Q20.5 4.3 20.5 6.2 L20.5 15" fill="#fff" stroke="#222" stroke-width="1.4"/>
<path d="M22.8 15.2 Q27 11.5 31.5 14.5 Q35.5 18 32.5 34.8 Q31 22 23.5 18.5 Z" fill="#7fb2ec" stroke="#2a7de0" stroke-width="1.1" stroke-linejoin="round"/>
</svg>
<svg class="a" style="left:1612px;top:348px" width="38" height="40" viewBox="0 0 38 40">
<path d="M6 33 L9 37.5 L29 37.5 L32 33" fill="#fafafa" stroke="#666" stroke-width="1.1"/>
<path d="M18.75 3 L33.75 15.75 L28.5 31.5 L9 31.5 L3.75 15.75 Z" fill="#fff" stroke="#222" stroke-width="1.5" stroke-linejoin="round"/>
</svg>
<svg class="a" style="left:1676px;top:346px" width="42" height="42" viewBox="0 0 42 42">
<g stroke="#222" stroke-width="1.4" fill="none">
<path d="M12.5 6.5 L38 6.5 M12.5 3 L12.5 10 M38 3 L38 10"/>
<path d="M5 12.5 L5 38.7 M2 12.5 L9.5 12.5 M2 38.7 L9.5 38.7"/>
<rect x="12.5" y="12.5" width="25.8" height="26.2" fill="#fff"/>
</g>
<g stroke="#2a86e0" stroke-width="1.5" fill="none" stroke-linecap="round" stroke-linejoin="round">
<path d="M25.25 16.5 L25.25 35 M15.5 26 L35 26"/>
<path d="M22.3 19.3 L25.25 16.3 L28.2 19.3 M22.3 32.2 L25.25 35.2 L28.2 32.2 M18.3 23 L15.3 26 L18.3 29 M32.2 23 L35.2 26 L32.2 29"/>
</g>
</svg>
<svg class="a" style="left:1746px;top:348px" width="36" height="40" viewBox="0 0 36 40">
<rect x="2.6" y="17.5" width="10" height="19.5" fill="#c9c9c9" stroke="#555" stroke-width="1.2"/>
<rect x="12.4" y="3.2" width="10" height="33.8" fill="#fff" stroke="#222" stroke-width="1.4"/>
<rect x="22.4" y="9.2" width="9.4" height="27.8" fill="#8dbcf0" stroke="#2a7de0" stroke-width="1.4"/>
</svg>
<div style="position:absolute;left:1513px;top:405px;width:475px;height:40px;background:linear-gradient(#ececec,#e3e3e3);border-bottom:1px solid #d2d2d2"></div>
<svg class="a" style="left:1527px;top:418px" width="14" height="13"><path d="M0 0.5 L14 0.5 L7 12.5 Z" fill="#6b6b6b"/></svg>
<div class="t" style="left:1549.35px;top:415.06px;font-size:20.6px;color:#1a1a1a;letter-spacing:0.360px;">Axis Options</div>
<div class="t" style="left:1541.99px;top:471.82px;font-size:20.3px;color:#111;font-weight:bold;letter-spacing:-0.191px;">Axis Type</div>
<svg class="a" style="left:1540px;top:507px" width="26" height="26"><circle cx="13" cy="13" r="12.5" fill="#3b86f7"/><circle cx="13" cy="13" r="4.5" fill="#fff"/></svg>
<div class="t" style="left:1571.65px;top:511.56px;font-size:19.3px;color:#1e1e1e;letter-spacing:0.408px;">Automatically select based on data</div>
<svg class="a" style="left:1540px;top:539px" width="26" height="26"><circle cx="13" cy="13.4" r="12" fill="#d0d0d0"/><circle cx="13" cy="13" r="12" fill="#fff" stroke="#c2c2c2" stroke-width="0.8"/></svg>
<div class="t" style="left:1571.07px;top:543.16px;font-size:19.3px;color:#1e1e1e;letter-spacing:0.254px;">Text axis</div>
<svg class="a" style="left:1540px;top:570px" width="26" height="26"><circle cx="13" cy="13.4" r="12" fill="#d0d0d0"/><circle cx="13" cy="13" r="12" fill="#fff" stroke="#c2c2c2" stroke-width="0.8"/></svg>
<div class="t" style="left:1570.41px;top:574.76px;font-size:19.3px;color:#1e1e1e;letter-spacing:0.179px;">Date axis</div>
<div class="t" style="left:1541.13px;top:619.12px;font-size:20.3px;color:#111;font-weight:bold;letter-spacing:-0.171px;">Horizontal axis crosses</div>
<svg class="a" style="left:1540px;top:661px" width="26" height="26"><circle cx="13" cy="13" r="12.5" fill="#3b86f7"/><circle cx="13" cy="13" r="4.5" fill="#fff"/></svg>
<div class="t" style="left:1570.95px;top:665.96px;font-size:19.3px;color:#1e1e1e;letter-spacing:0.505px;">Automatic</div>
<svg class="a" style="left:1541px;top:705px" width="26" height="26"><circle cx="13" cy="13.4" r="12" fill="#d0d0d0"/><circle cx="13" cy="13" r="12" fill="#fff" stroke="#c2c2c2" stroke-width="0.8"/></svg>
<div class="t" style="left:1572.85px;top:710.36px;font-size:19.3px;color:#1e1e1e;letter-spacing:0.459px;">At category number</div>
<div style="position:absolute;left:1904px;top:700px;width:54px;height:37px;background:#fff;border:1px solid #c8c8c8;border-radius:4px"></div>
<div class="t" style="left:1915.55px;top:710.36px;font-size:19.3px;color:#777;">1</div>
<svg class="a" style="left:1540px;top:749px" width="26" height="26"><circle cx="13" cy="13.4" r="12" fill="#d0d0d0"/><circle cx="13" cy="13" r="12" fill="#fff" stroke="#c2c2c2" stroke-width="0.8"/></svg>
<div class="t" style="left:1570.95px;top:754.66px;font-size:19.3px;color:#1e1e1e;letter-spacing:0.370px;">At maximum category</div>
<div class="t" style="left:1542.59px;top:804.52px;font-size:20.3px;color:#111;font-weight:bold;letter-spacing:-0.334px;">Axis position</div>
<svg class="a" style="left:1540px;top:840px" width="26" height="26"><circle cx="13" cy="13.4" r="12" fill="#d0d0d0"/><circle cx="13" cy="13" r="12" fill="#fff" stroke="#c2c2c2" stroke-width="0.8"/></svg>
<div class="t" style="left:1570.28px;top:844.96px;font-size:19.3px;color:#1e1e1e;letter-spacing:0.443px;">On tick marks</div>
<svg class="a" style="left:1540px;top:872px" width="26" height="26"><circle cx="13" cy="13" r="12.5" fill="#3b86f7"/><circle cx="13" cy="13" r="4.5" fill="#fff"/></svg>
<div class="t" style="left:1569.61px;top:876.66px;font-size:19.3px;color:#1e1e1e;letter-spacing:0.496px;">Between tick marks</div>
<svg class="a" style="left:1542px;top:918px" width="22" height="22"><rect x="0" y="0" width="22" height="22" rx="4" fill="#3b86f7"/><path d="M5.5 11.5 L9.5 15.5 L16.5 6" stroke="#fff" stroke-width="2.2" fill="none" stroke-linecap="round" stroke-linejoin="round"/></svg>
<div class="t" style="left:1570.24px;top:920.56px;font-size:19.3px;color:#1e1e1e;letter-spacing:0.376px;">Categories in reverse order</div>
<div style="position:absolute;left:1513px;top:965px;width:475px;height:40px;background:linear-gradient(#f1f1f1,#e9e9e9);border-top:1px solid #d6d6d6;border-bottom:1px solid #d2d2d2"></div>
<svg class="a" style="left:1528px;top:978px" width="13" height="14"><path d="M0.5 0 L12.5 7 L0.5 14 Z" fill="#6b6b6b"/></svg>
<div class="t" style="left:1549.14px;top:974.66px;font-size:20.6px;color:#1a1a1a;letter-spacing:0.490px;">Tick Marks</div>
<div style="position:absolute;left:1513px;top:1005px;width:475px;height:16px;background:linear-gradient(#f1f1f1,#ebebeb)"></div>
<svg class="a" style="left:1528px;top:1016px" width="13" height="14"><path d="M0.5 0 L12.5 7 L0.5 14 Z" fill="#6b6b6b"/></svg>
<div class="t" style="left:1547.90px;top:1014.06px;font-size:20.6px;color:#1a1a1a;letter-spacing:1.140px;">Labels</div>
<div style="position:absolute;left:1518px;top:897px;width:337px;height:75px;border:11px solid #fb2b6c;border-radius:6px"></div>
<div style="position:absolute;left:1858px;top:6px;width:142px;height:129px;border:10.5px solid #fb2b6c;border-bottom-width:11.7px;border-radius:9px"></div>
</body></html>
